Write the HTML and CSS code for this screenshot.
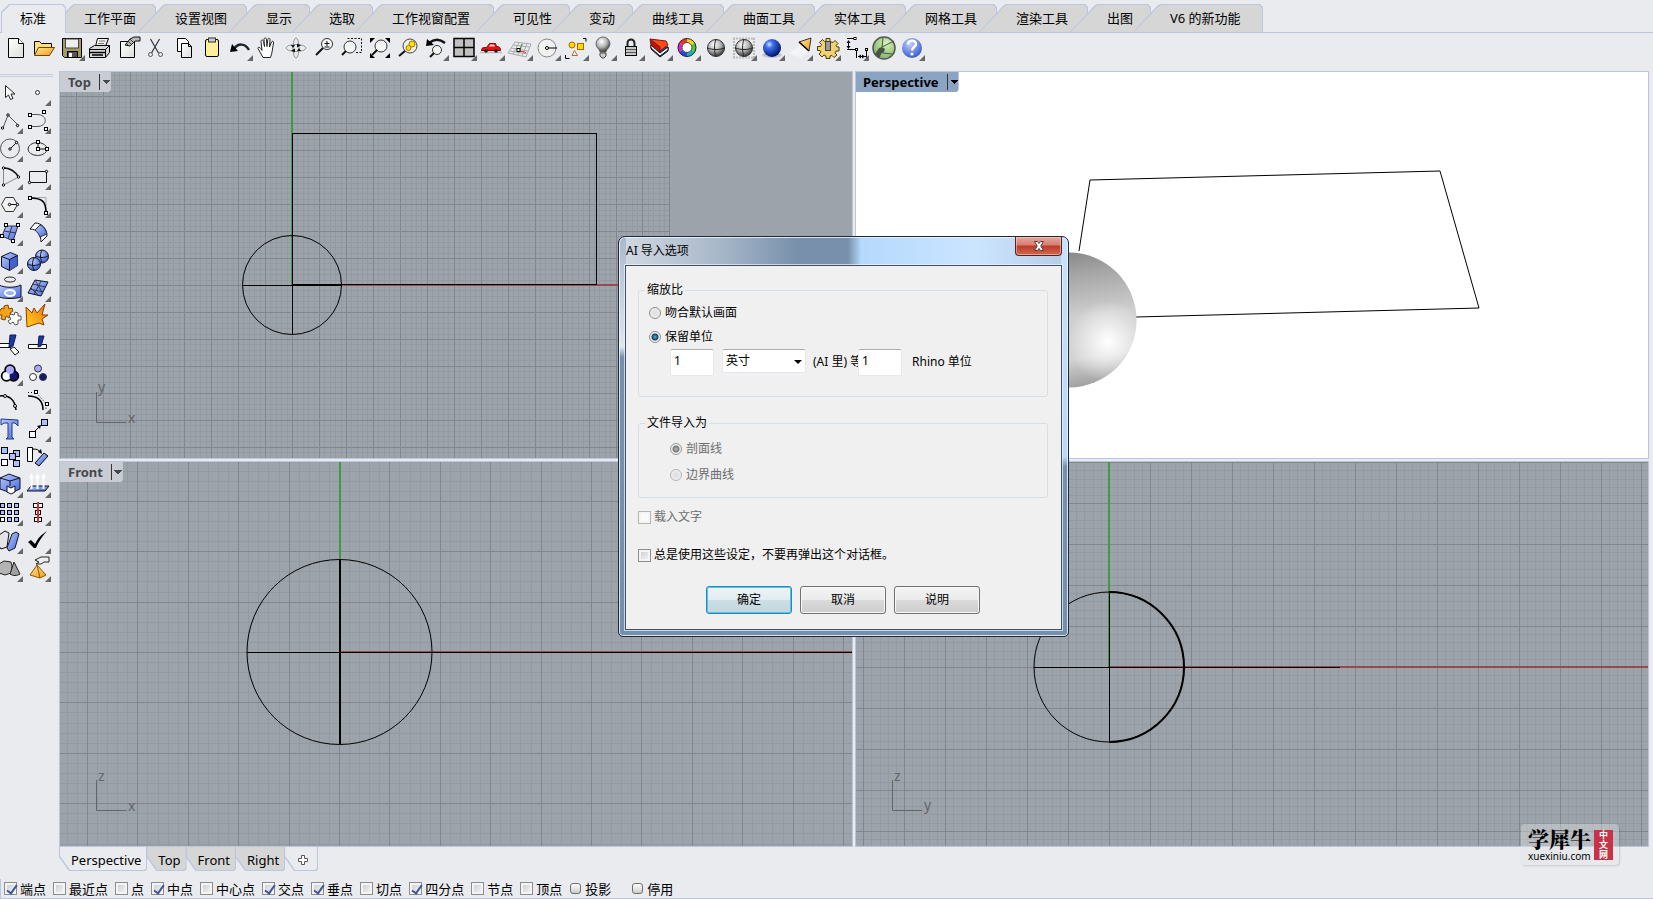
FILE: index.html
```html
<!DOCTYPE html>
<html lang="zh-CN">
<head>
<meta charset="utf-8">
<title>Rhino</title>
<link rel="stylesheet" href="styles.css">
</head>
<body>
<svg class="defs" aria-hidden="true">
  <defs>
    <linearGradient id="paper" x1="0" y1="0" x2="1" y2="1"><stop offset="0" stop-color="#fff"/><stop offset="1" stop-color="#dcdcdc"/></linearGradient>
    <linearGradient id="gold" x1="0" y1="0" x2="1" y2="1"><stop offset="0" stop-color="#ffe89a"/><stop offset="1" stop-color="#f59b12"/></linearGradient>
    <linearGradient id="fire" x1="0" y1="1" x2="1" y2="0"><stop offset="0" stop-color="#ffd21c"/><stop offset="1" stop-color="#f4700c"/></linearGradient>
    <linearGradient id="blue" x1="0" y1="0" x2="1" y2="1"><stop offset="0" stop-color="#b9cbff"/><stop offset="1" stop-color="#4468dc"/></linearGradient>
    <radialGradient id="ballBlue" cx=".35" cy=".3" r=".7"><stop offset="0" stop-color="#cfe0ff"/><stop offset=".3" stop-color="#3d6ff0"/><stop offset="1" stop-color="#02186e"/></radialGradient>
    <radialGradient id="ballGrey" cx=".4" cy=".3" r=".75"><stop offset="0" stop-color="#fff"/><stop offset=".5" stop-color="#b5b5b5"/><stop offset="1" stop-color="#222"/></radialGradient>
    <radialGradient id="ballGreen" cx=".6" cy=".3" r=".7"><stop offset="0" stop-color="#d7f5b8"/><stop offset="1" stop-color="#7fb569"/></radialGradient>
    <radialGradient id="ballLight" cx=".4" cy=".3" r=".75"><stop offset="0" stop-color="#c3d0ff"/><stop offset="1" stop-color="#2f55c8"/></radialGradient>
    <linearGradient id="sphereBody" x1=".35" y1="0" x2=".5" y2="1"><stop offset="0" stop-color="#858585"/><stop offset=".18" stop-color="#a4a4a4"/><stop offset=".5" stop-color="#cfcfcf"/><stop offset=".8" stop-color="#d2d2d2"/><stop offset="1" stop-color="#a2a2a2"/></linearGradient>
    <radialGradient id="sphereGlow" cx=".79" cy=".66" r=".3"><stop offset="0" stop-color="#fff"/><stop offset=".25" stop-color="#fff" stop-opacity=".75"/><stop offset="1" stop-color="#fff" stop-opacity="0"/></radialGradient>
  </defs>
</svg>

<div class="app">
<nav class="tabs" aria-label="工具列">
  <button class="tab tab-active">标准</button>
  <button class="tab tab-4">工作平面</button>
  <button class="tab tab-4">设置视图</button>
  <button class="tab tab-2">显示</button>
  <button class="tab tab-2">选取</button>
  <button class="tab tab-6">工作视窗配置</button>
  <button class="tab tab-3">可见性</button>
  <button class="tab tab-2">变动</button>
  <button class="tab tab-4">曲线工具</button>
  <button class="tab tab-4">曲面工具</button>
  <button class="tab tab-4">实体工具</button>
  <button class="tab tab-4">网格工具</button>
  <button class="tab tab-4">渲染工具</button>
  <button class="tab tab-2">出图</button>
  <button class="tab tab-new">V6 的新功能</button>
</nav>

<div class="toolbar" role="toolbar" aria-label="标准">
  <button class="tool" aria-label="新建"><svg viewBox="0 0 28 28"><path d="M7.500 5.500h10l5 5v14h-15z" fill="url(#paper)" stroke="#000"/><path d="M17.500 5.500v5h5" fill="#fff" stroke="#000"/></svg></button>
  <button class="tool" aria-label="打开"><svg viewBox="0 0 28 28"><path d="M5.500 21.500v-13h5l2 2h10v4" fill="#ffe07a" stroke="#000"/><path d="M5.500 22.500l4-8h16l-5 8z" fill="url(#gold)" stroke="#6b4400"/></svg></button>
  <button class="tool more" aria-label="保存"><svg viewBox="0 0 28 28"><path d="M5.500 5.500h19v19h-17l-2-2z" fill="#a49b62" stroke="#000"/><path d="M8.500 6h13v9h-13z" fill="#eee" stroke="#444"/><path d="M10.500 18.500h10v6h-10z" fill="#555" stroke="#000"/><path d="M12 20h3v4h-3z" fill="#f5f5f5"/></svg></button>
  <button class="tool" aria-label="打印"><svg viewBox="0 0 28 28"><path d="M10.500 13.500l2-8h11l-3 8z" fill="url(#paper)" stroke="#000"/><path d="M14 8h6M13 10.500h6" stroke="#777"/><path d="M4.500 15.500l5-3h15v7l-4 5h-16z" fill="#d8d8d8" stroke="#000"/><path d="M4.500 16.500h16l4-4M20.500 16.500v8" fill="none" stroke="#000"/><path d="M5 19.500h15M7 22h11" stroke="#000" stroke-width="1.500"/></svg></button>
  <button class="tool" aria-label="文件属性"><svg viewBox="0 0 28 28"><path d="M7.500 8.500h14v16h-14z" fill="url(#paper)" stroke="#000"/><path d="M12 12l5-6 4-2h6v4h-5l-5 5z" fill="#bbb" stroke="#111"/><path d="M13 10l3 3M15 8l3 3M17 6l3 3" stroke="#333"/></svg></button>
  <button class="tool" aria-label="剪切"><svg viewBox="0 0 28 28"><path d="M9.500 6l8 14M18.500 6l-8 14" fill="none" stroke="#333" stroke-width="1.200"/><circle cx="9.500" cy="21.500" r="2" fill="none" stroke="#555"/><circle cx="19.500" cy="21.500" r="2" fill="none" stroke="#555"/></svg></button>
  <button class="tool" aria-label="复制"><svg viewBox="0 0 28 28"><path d="M8.500 5.500h8l3 3v10h-11z" fill="#fff" stroke="#000"/><path d="M12.500 10.500h7l3 3v11h-10z" fill="url(#paper)" stroke="#000"/><path d="M19.500 10.500v3h3" fill="none" stroke="#000"/></svg></button>
  <button class="tool" aria-label="粘贴"><svg viewBox="0 0 28 28"><rect x="8.500" y="6.500" width="13" height="17" rx="1.500" fill="#ffef9c" stroke="#000"/><rect x="11.500" y="5" width="7" height="4" fill="#ccc" stroke="#333"/></svg></button>
  <button class="tool more" aria-label="撤销"><svg viewBox="0 0 28 28"><path d="M9 16c4-6 11-6 15 1" fill="none" stroke="#222" stroke-width="2.500"/><path d="M5 19l2-8 6 7z" fill="#000"/></svg></button>
  <button class="tool" aria-label="平移"><svg viewBox="0 0 28 28"><path d="M9 24.500c-2-3-3-6-5-9 0-2 2-2 4 2l-1-9c0-2 2-2 2.500 0l1 5-.5-7c0-2 2.500-2 2.500 0l.5 7 .8-7c.4-2 2.500-1.500 2.200.5l-.5 7 2-5c1-1.500 2.500-.5 2 1-1 5-1 9-3 14.500z" transform="translate(1 0)" fill="#fff" stroke="#222"/></svg></button>
  <button class="tool" aria-label="旋转视图"><svg viewBox="0 0 28 28"><ellipse cx="15" cy="15" rx="10" ry="3.500" fill="none" stroke="#999"/><ellipse cx="15" cy="15" rx="3" ry="10" fill="none" stroke="#999"/><path d="M10 17.500l4-2v4zM20 12.500l-4-2v4zM18 15l-2 3h4zM12 15l-2-3h4z" fill="#111"/></svg></button>
  <button class="tool" aria-label="动态缩放"><svg viewBox="0 0 28 28"><circle cx="18" cy="11" r="5.500" fill="#f8f8f8" stroke="#333"/><path d="M14 15l-7 7" stroke="#111" stroke-width="2"/><path d="M15.500 10.500h5M18 8v5M15.500 14h5" stroke="#111"/></svg></button>
  <button class="tool" aria-label="框选缩放"><svg viewBox="0 0 28 28"><path d="M10.500 5.500h14v14h-7" fill="none" stroke="#111" stroke-dasharray="2 1.500"/><circle cx="13" cy="14" r="6" fill="#f4f4f4" stroke="#333"/><path d="M9 18l-4 4" stroke="#111" stroke-width="2"/></svg></button>
  <button class="tool" aria-label="缩放至范围"><svg viewBox="0 0 28 28"><circle cx="16" cy="13" r="6" fill="#f4f4f4" stroke="#333"/><path d="M12 17l-5 5" stroke="#111" stroke-width="2"/><path d="M5 5h5l-5 5zM25 5v5l-5-5zM5 25v-5l5 5zM25 25h-5l5-5z" fill="#000"/></svg></button>
  <button class="tool" aria-label="缩放至选取"><svg viewBox="0 0 28 28"><circle cx="17" cy="13" r="7" fill="#eee" stroke="#444"/><circle cx="19" cy="11" r="3" fill="#ffe000" stroke="#a07800"/><circle cx="15.500" cy="15" r="2.500" fill="#ffe000" stroke="#a07800"/><path d="M12 18l-6 5" stroke="#111" stroke-width="2"/></svg></button>
  <button class="tool more" aria-label="复原视图"><svg viewBox="0 0 28 28"><path d="M8 10c5-4 11-4 16 0" fill="none" stroke="#111" stroke-width="2.500"/><path d="M5 13l1-7 7 6z" fill="#000"/><circle cx="16" cy="17" r="4.500" fill="#f4f4f4" stroke="#333"/><path d="M13 20l-4 4" stroke="#111" stroke-width="2"/></svg></button>
  <button class="tool more" aria-label="四视图"><svg viewBox="0 0 28 28"><path d="M5 5.500h20v18h-20zM15 5v19M5 14.500h20" fill="#c0c0c0" stroke="#000" stroke-width="1.500"/></svg></button>
  <button class="tool more" aria-label="隐藏物件"><svg viewBox="0 0 28 28"><path d="M3 19.500h22" stroke="#bbb" stroke-width="1.500"/><path d="M4.500 17.500c0-2.500 1-3 5-3l3-4h6l1 3c3 0 4 1 4 4z" fill="#e51414" stroke="#8a0000"/><path d="M13 11.500h4l1 2h-6z" fill="#ffd6d6"/><circle cx="9" cy="18" r="1.800" fill="#222"/><circle cx="19" cy="18" r="1.800" fill="#222"/></svg></button>
  <button class="tool more" aria-label="工作平面"><svg viewBox="0 0 28 28"><path d="M10 9l16 2-5 13L3 20zM8 12l16 2M6 15l17 3M5 18l17 3M14 9.500L8 21M18 10l-5 12M22 10.500L17 23" fill="none" stroke="#aaa"/><path d="M15 18l6 1.500" stroke="#d22"/><path d="M15 16l2-5" stroke="#2a2"/><rect x="12" y="15.500" width="3" height="3" fill="#fff" stroke="#000"/></svg></button>
  <button class="tool more" aria-label="设置视图"><svg viewBox="0 0 28 28"><circle cx="14" cy="15" r="9" fill="#f1f1f1" stroke="#888"/><path d="M14 15h10" stroke="#000"/><circle cx="14" cy="15" r="1.500" fill="#fff" stroke="#000"/></svg></button>
  <button class="tool more" aria-label="物件选取"><svg viewBox="0 0 28 28"><circle cx="11" cy="12" r="3" fill="#ffd900" stroke="#a36b00"/><rect x="16.500" y="10.500" width="6" height="6" fill="#ffd900" stroke="#a36b00"/><path d="M11 22.500l2.500-5 3 5z" fill="#fff" stroke="#b06a35"/><path d="M22 5.500h3v3M4.500 22v3.500h4" fill="none" stroke="#000"/></svg></button>
  <button class="tool more" aria-label="灯光"><svg viewBox="0 0 28 28"><path d="M11 19c0-3-4-4-4-8a7 7 0 0 1 14 0c0 4-4 5-4 8z" fill="url(#ballGrey)" stroke="#666"/><path d="M11 20h6v3l-2 2h-2l-2-2z" fill="#ccc" stroke="#444"/></svg></button>
  <button class="tool more" aria-label="锁定"><svg viewBox="0 0 28 28"><path d="M10.500 14v-4a3.500 3.500 0 0 1 7 0v4" fill="none" stroke="#222" stroke-width="2"/><rect x="8.500" y="13.500" width="11" height="9" fill="#c6c6c6" stroke="#000"/><path d="M9 16.500h10M9 19.500h10" stroke="#555"/></svg></button>
  <button class="tool more" aria-label="图层"><svg viewBox="0 0 28 28"><path d="M6 16l9 8 8-6v-4l-17-2z" fill="#2c49ac" stroke="#111"/><path d="M6 12l9 8 8-6v3l-8 6-9-8z" fill="#fff" stroke="#111"/><path d="M5 6l10 8v5l-9-7z" fill="#b31a08" stroke="#811"/><path d="M5 6l16 2 2 4-8 6v-4z" fill="#ff4a16" stroke="#811"/></svg></button>
  <button class="tool more" aria-label="物件属性"><svg viewBox="0 0 28 28"><g fill="none" stroke-width="4"><path d="M14 7.500a7 7 0 0 1 6.100 3.500" stroke="#ffd21c"/><path d="M20.100 11a7 7 0 0 1 0 7" stroke="#4fca31"/><path d="M20.100 18a7 7 0 0 1-6.100 3.500" stroke="#11b7bd"/><path d="M14 21.500a7 7 0 0 1-6.100-3.500" stroke="#2947df"/><path d="M7.900 18a7 7 0 0 1 0-7" stroke="#dd1ed1"/><path d="M7.900 11a7 7 0 0 1 6.100-3.500" stroke="#f3302b"/></g><circle cx="14" cy="14.500" r="9" fill="none" stroke="#222"/><circle cx="14" cy="14.500" r="5" fill="#fff" stroke="#444"/></svg></button>
  <button class="tool" aria-label="着色"><svg viewBox="0 0 28 28"><circle cx="15" cy="15" r="8.500" fill="url(#ballGrey)" stroke="#333"/><path d="M15 6.500c-2 5-2 12 0 17M6.500 15c5 2 12 2 17 0" fill="none" stroke="#222"/></svg></button>
  <button class="tool more" aria-label="着色选取"><svg viewBox="0 0 28 28"><path d="M4 5.500h22M4 24.500h22M5 5v20M25 5v20" fill="none" stroke="#bcbcbc" stroke-width="2" stroke-dasharray="2 1"/><circle cx="15" cy="15" r="8.500" fill="url(#ballGrey)" stroke="#333"/><path d="M15 6.500c-2 5-2 12 0 17M6.500 15c5 2 12 2 17 0" fill="none" stroke="#222"/></svg></button>
  <button class="tool more" aria-label="渲染"><svg viewBox="0 0 28 28"><ellipse cx="15" cy="22" rx="10" ry="3" fill="#c4c5ca"/><circle cx="15" cy="15" r="9" fill="url(#ballBlue)"/></svg></button>
  <button class="tool more" aria-label="聚光灯"><svg viewBox="0 0 28 28"><path d="M4 20l13-9 6 7-7 7z" fill="#f4f4f8"/><path d="M14 9l12-4-2 13z" fill="url(#gold)" stroke="#333"/><path d="M14 9l10 9" stroke="#000" stroke-width="1.500"/></svg></button>
  <button class="tool more" aria-label="选项"><svg viewBox="0 0 28 28"><path d="M13 5.500h4v3l3 1 2-2 3 3-2 2 1 1.500h2v4h-3l-1 2 2 2-3 2.500-2-2-2 .5v2.500h-4v-2.500l-2-1-2 2-3-3 2-2-1-1.500H4.500v-4h3l1-2-2-2 3-3 2 2 1.500-.5z" fill="#f0d274" stroke="#4b3a00"/><rect x="12.500" y="8.500" width="5" height="9" fill="#999" stroke="#444"/></svg></button>
  <button class="tool more" aria-label="尺寸标注"><svg viewBox="0 0 28 28"><path d="M6 5.500h8M6 16.500h8M7.500 8v7M15.500 17v8M25.500 17v8M17 23.500h8" fill="none" stroke="#000"/><path d="M7.500 7l-2 3h4zM7.500 16l-2-3h4zM17 23.500l3-2v4zM24 23.500l-3-2v4z" fill="#000"/><g fill="#fff" stroke="#000"><rect x="13" y="4.500" width="2" height="2"/><rect x="14.500" y="15.500" width="2" height="2"/><rect x="24.500" y="15.500" width="2" height="2"/></g></svg></button>
  <button class="tool" aria-label="Grasshopper"><svg viewBox="0 0 28 28"><circle cx="15" cy="15" r="11" fill="url(#ballGreen)" stroke="#555" stroke-width="1.500"/><path d="M6 21l4-6 3-1 3 2-1 3-3 2-1 3-2 0z" fill="#4b5348"/><path d="M13 14l12-6M14 5l-1 9M14 20l9 1" fill="none" stroke="#4b5348"/></svg></button>
  <button class="tool more" aria-label="说明"><svg viewBox="0 0 28 28"><circle cx="15" cy="15" r="10" fill="url(#ballLight)"/><path d="M11 11.500c0-5 8-5 8-.5 0 3-4 3-4 6.500" fill="none" stroke="#fff" stroke-width="2.500"/><circle cx="15" cy="21" r="1.600" fill="#fff"/></svg></button>
</div>

<div class="workspace">
<aside class="side" role="toolbar" aria-label="主要">
  <button class="tool" aria-label="选取"><svg viewBox="0 0 28 28"><path d="M10.500 7.500v12l3-2.500 2 4.500 2.500-1-2-4.500h4z" fill="#fff" stroke="#222"/></svg></button>
  <button class="tool more" aria-label="点"><svg viewBox="0 0 28 28"><circle cx="14.500" cy="14.500" r="2" fill="#fff" stroke="#333"/></svg></button>
  <button class="tool more" aria-label="多重直线"><svg viewBox="0 0 28 28"><path d="M8 22l5-13 10 10" fill="none" stroke="#555"/><g fill="#fff" stroke="#000"><circle cx="7.500" cy="22" r="1.200"/><circle cx="13" cy="9" r="1.200"/><circle cx="22.500" cy="19.500" r="1.200"/></g></svg></button>
  <button class="tool more" aria-label="曲线"><svg viewBox="0 0 28 28"><path d="M7 8.500h7c11 0 11 12 0 12H7" fill="none" stroke="#555"/><g fill="#fff" stroke="#000"><rect x="5.500" y="7.500" width="3" height="3"/><rect x="19.500" y="4.500" width="3" height="3"/><rect x="5.500" y="19.500" width="3" height="3"/><rect x="21.500" y="21.500" width="3" height="3"/></g></svg></button>
  <button class="tool more" aria-label="圆"><svg viewBox="0 0 28 28"><circle cx="15" cy="14.500" r="9.500" fill="none" stroke="#555"/><path d="M15 15l7-7" stroke="#111"/><g fill="#fff" stroke="#000"><circle cx="15" cy="15" r="1.200"/><circle cx="21.500" cy="8.500" r="1.200"/></g></svg></button>
  <button class="tool more" aria-label="椭圆"><svg viewBox="0 0 28 28"><ellipse cx="14.500" cy="15" rx="9.500" ry="6.500" fill="none" stroke="#333"/><path d="M15 8v7h9" fill="none" stroke="#111"/><g fill="#fff" stroke="#000"><rect x="13.500" y="6.500" width="3" height="3"/><rect x="13.500" y="13.500" width="3" height="3"/><rect x="22.500" y="13.500" width="3" height="3"/></g></svg></button>
  <button class="tool more" aria-label="圆弧"><svg viewBox="0 0 28 28"><path d="M8.500 23V6c7 0 12 4 15 9z" fill="none" stroke="#888"/><path d="M8.500 6c7 0 12 4 15 9" fill="none" stroke="#111" stroke-width="1.500"/><g fill="#fff" stroke="#000"><circle cx="8.500" cy="6" r="1.200"/><circle cx="23.500" cy="15" r="1.200"/><circle cx="8.500" cy="23" r="1.200"/></g></svg></button>
  <button class="tool more" aria-label="矩形"><svg viewBox="0 0 28 28"><path d="M6.500 9.500h17v11h-17z" fill="none" stroke="#111"/><g fill="#fff" stroke="#000"><circle cx="23.500" cy="9.500" r="1.200"/><circle cx="6.500" cy="20.500" r="1.200"/></g></svg></button>
  <button class="tool more" aria-label="多边形"><svg viewBox="0 0 28 28"><path d="M10.500 7.500h8l4 7-4 7h-8l-4-7z" fill="#f1f1f1" stroke="#333"/><path d="M14 14.500h9" stroke="#111"/><g fill="#fff" stroke="#000"><circle cx="14.500" cy="14.500" r="1.200"/><circle cx="22.500" cy="14.500" r="1.200"/></g></svg></button>
  <button class="tool more" aria-label="曲线圆角"><svg viewBox="0 0 28 28"><path d="M7 7.500h16V24" fill="none" stroke="#aaa"/><path d="M7 8c13 0 16 4 16 15" fill="none" stroke="#000" stroke-width="1.500"/><g fill="#fff" stroke="#000"><rect x="5.500" y="6.500" width="3" height="3"/><rect x="21.500" y="21.500" width="3" height="3"/></g></svg></button>
  <button class="tool more" aria-label="曲面"><svg viewBox="0 0 28 28"><path d="M11 8h12l-5 15-11-5z" fill="url(#blue)" stroke="#334"/><path d="M17 8l-4 13M9 13l12 2" stroke="#334"/><g fill="#fff" stroke="#000"><rect x="9.500" y="5.500" width="3" height="3"/><rect x="21.500" y="5.500" width="3" height="3"/><rect x="5.500" y="16.500" width="3" height="3"/><rect x="16.500" y="21.500" width="3" height="3"/></g></svg></button>
  <button class="tool more" aria-label="扫掠"><svg viewBox="0 0 28 28"><path d="M7 11l5-6c7 0 12 6 12 13l-6 6c0-7-4-13-11-13z" fill="#fff" stroke="#111"/><path d="M12 12l5-5c4 2 6 5 7 9l-7 3c-1-3-3-5-5-7z" fill="url(#blue)" stroke="#334"/></svg></button>
  <button class="tool more" aria-label="立方体"><svg viewBox="0 0 28 28"><path d="M6.500 10.500l9-4 7 3v10l-8 5-8-4z" fill="url(#blue)" stroke="#112"/><path d="M14.500 13.500l8-4v10l-8 5z" fill="#4162c8"/><path d="M6.500 10.500l8 3 8-4M14.500 13.500v11" fill="none" stroke="#112"/></svg></button>
  <button class="tool more" aria-label="布尔运算"><svg viewBox="0 0 28 28"><circle cx="19" cy="10.500" r="6.500" fill="url(#ballLight)" stroke="#112"/><circle cx="11" cy="18" r="6.500" fill="url(#ballLight)" stroke="#112"/><path d="M19 4c-2 4-2 8 0 12M5 18c4 2 8 2 12 0M11 12c-2 4-2 8 0 12M13 10c4 2 8 2 12 0" fill="none" stroke="#112"/></svg></button>
  <button class="tool more" aria-label="挤出"><svg viewBox="0 0 28 28"><ellipse cx="15" cy="5.500" rx="5.500" ry="2.500" fill="none" stroke="#222"/><path d="M4 11c6 3 16 3 22 0v12c-6 2-16 2-22 0z" fill="url(#blue)" stroke="#112"/><ellipse cx="15" cy="19" rx="5" ry="3" fill="#9db4ff" stroke="#fff" stroke-width="2"/></svg></button>
  <button class="tool more" aria-label="网格"><svg viewBox="0 0 28 28"><path d="M12 6l13 2-7 14-13-3z" fill="url(#blue)" stroke="#112"/><path d="M18 7l-7 13.500M9.500 10l13 3M7 15l13 3M12 6l7 12M8 14l7 7" stroke="#334" fill="none"/></svg></button>
  <button class="tool" aria-label="组合"><svg viewBox="0 0 28 28"><path d="M5 8l2-2 2 1V4l4-1 1 4 3-1 1 3-3 2 2 3-3 2-3-2-1 4-4-1 1-4-3 0z" fill="#f7a21b" stroke="#7a4700"/><path d="M14 14l2-2 3 1 1-3 3 1 0 3 3 0 0 4-3 0 0 4-3 1-2-3-3 2-2-3 3-2z" fill="#fff" stroke="#555"/></svg></button>
  <button class="tool" aria-label="炸开"><svg viewBox="0 0 28 28"><path d="M3 5l6 6 2-5 3 5 8-9-3 11 6 0-6 4 2 6-5-2-12 4z" fill="url(#fire)" stroke="#8b3d00"/></svg></button>
  <button class="tool" aria-label="修剪"><svg viewBox="0 0 28 28"><path d="M4 13.500h12v4H4zM15 19l4-2 5 5-4 3z" fill="#fff" stroke="#111"/><path d="M15 5h6l-3 11-4 1z" fill="#1d3a9c" stroke="#0a1c5c"/></svg></button>
  <button class="tool" aria-label="分割"><svg viewBox="0 0 28 28"><path d="M5.500 14.500h18v4h-18z" fill="#fff" stroke="#111"/><path d="M16 6h5l-3 10-3 1z" fill="#1d3a9c" stroke="#0a1c5c"/></svg></button>
  <button class="tool more" aria-label="群组"><svg viewBox="0 0 28 28"><g stroke="#000" stroke-width="2.500"><circle cx="15" cy="12" r="4.500"/><circle cx="11.500" cy="18" r="4.500"/><circle cx="18.500" cy="18" r="4.500"/></g><circle cx="11.500" cy="18" r="4" fill="#fff"/><circle cx="18.500" cy="18" r="4" fill="#15157a"/><circle cx="15" cy="12" r="4" fill="#a9a9ff"/></svg></button>
  <button class="tool" aria-label="解散群组"><svg viewBox="0 0 28 28"><g stroke="#333"><circle cx="15" cy="10.500" r="3.500" fill="#a9a9ff"/><circle cx="10" cy="19" r="3.500" fill="#fff"/><circle cx="20" cy="19" r="3.500" fill="#15157a"/></g></svg></button>
  <button class="tool" aria-label="编辑点"><svg viewBox="0 0 28 28"><path d="M4 10c10-1 16 3 17 14" fill="none" stroke="#000" stroke-width="1.500"/><g fill="#fff" stroke="#000"><circle cx="10" cy="10" r="1.500"/><circle cx="20" cy="20" r="1.500"/></g></svg></button>
  <button class="tool more" aria-label="控制点"><svg viewBox="0 0 28 28"><path d="M5 10c10 0 15 5 15 14" fill="none" stroke="#000" stroke-width="1.500"/><path d="M5 6.500h8l10 11v7" fill="none" stroke="#000" stroke-dasharray="1 2"/><g fill="#fff" stroke="#000"><rect x="11.500" y="4.500" width="3" height="3"/><rect x="22.500" y="16.500" width="3" height="3"/></g></svg></button>
  <button class="tool" aria-label="文字"><svg viewBox="0 0 28 28"><path d="M6 5l17 1v6l-3-3h-3v14l2 2h-8l2-2V9H9l-3 2z" fill="url(#blue)" stroke="#203a80"/></svg></button>
  <button class="tool more" aria-label="移动"><svg viewBox="0 0 28 28"><rect x="6.500" y="17.500" width="6" height="6" fill="#fff" stroke="#000"/><rect x="18.500" y="5.500" width="6" height="6" fill="#a9bfff" stroke="#000"/><path d="M12 17l4-4" stroke="#000"/><path d="M18 11l-1 4-3-3z" fill="#000"/></svg></button>
  <button class="tool" aria-label="阵列复制"><svg viewBox="0 0 28 28"><g fill="#a9bfff" stroke="#000"><rect x="6.500" y="5.500" width="6" height="6"/><rect x="18.500" y="8.500" width="6" height="6"/><rect x="14.500" y="11.500" width="6" height="6"/><rect x="18.500" y="18.500" width="6" height="6"/><rect x="6.500" y="17.500" width="6" height="6" fill="#fff"/></g></svg></button>
  <button class="tool" aria-label="旋转"><svg viewBox="0 0 28 28"><path d="M4.500 5.500h5v14h-5z" fill="#fff" stroke="#000"/><path d="M12 21l9-10 4 3-9 10z" fill="url(#blue)" stroke="#000"/><path d="M10 7c4 0 6 1 7 3" fill="none" stroke="#000"/><path d="M19 12l-4-2 3-3z" fill="#000"/></svg></button>
  <button class="tool more" aria-label="实体编辑"><svg viewBox="0 0 28 28"><path d="M5 8l9-4 11 4v11l-9 4-11-4z" fill="url(#blue)" stroke="#112"/><path d="M5 8l10 3 10-3M15 11v5" fill="none" stroke="#112"/><path d="M12 16l4 2 4-2v6l-4 2-4-2z" fill="#fff" stroke="#112"/></svg></button>
  <button class="tool more" aria-label="投影"><svg viewBox="0 0 28 28"><path d="M8 16h18l-4 5H4z" fill="url(#blue)" stroke="#112"/><path d="M8.500 19V7M14.500 19V7M20.500 19V7" stroke="#fff" stroke-width="2"/><path d="M8.500 3l-2.500 5h5zM14.500 3l-2.500 5h5zM20.500 3l-2.500 5h5z" fill="#fff"/></svg></button>
  <button class="tool more" aria-label="阵列"><svg viewBox="0 0 28 28"><g fill="#a9bfff" stroke="#000"><rect x="5.500" y="5.500" width="4" height="4"/><rect x="12.500" y="5.500" width="4" height="4"/><rect x="19.500" y="5.500" width="4" height="4"/><rect x="5.500" y="12.500" width="4" height="4"/><rect x="12.500" y="12.500" width="4" height="4"/><rect x="19.500" y="12.500" width="4" height="4"/><rect x="5.500" y="19.500" width="4" height="4" fill="#fff"/><rect x="12.500" y="19.500" width="4" height="4"/><rect x="19.500" y="19.500" width="4" height="4"/></g></svg></button>
  <button class="tool more" aria-label="对齐"><svg viewBox="0 0 28 28"><g fill="#fff" stroke="#000"><rect x="10.500" y="5.500" width="9" height="4"/><rect x="12.500" y="12.500" width="5" height="4"/><rect x="11.500" y="19.500" width="7" height="4"/></g><path d="M15 4v21" stroke="#d83030" stroke-width="2"/></svg></button>
  <button class="tool more" aria-label="弯曲"><svg viewBox="0 0 28 28"><path d="M4 9l6-4 4 2-2 14-6 2-2-3z" fill="#e4e4e4" stroke="#111"/><path d="M17 8l4-2 3 2-4 14-6 3-2-3z" fill="url(#blue)" stroke="#112"/></svg></button>
  <button class="tool more" aria-label="检查"><svg viewBox="0 0 28 28"><path d="M5 16l3-2 4 4c3-6 6-9 12-13-5 6-9 11-11 17h-2z" fill="#000"/></svg></button>
  <button class="tool more" aria-label="实体"><svg viewBox="0 0 28 28"><path d="M4 10l5-3 7 1 1 4-1 7-6 2-6-2z" fill="#b4b4b4" stroke="#222"/><path d="M19 8l6 12c-3 2-7 2-10 0z" fill="#a0a0a0" stroke="#222"/></svg></button>
  <button class="tool more" aria-label="金字塔"><svg viewBox="0 0 28 28"><path d="M14 11l9 10-6 3-10-3z" fill="url(#gold)" stroke="#8b5500"/><path d="M14 11l3 13" stroke="#8b5500"/><path d="M12 6l6-3h8v5h-5l-3 2h-5l3-2z" fill="#eee" stroke="#222"/></svg></button>
</aside>

<main class="views">
  <section class="view">
    <svg class="canvas" data-x="232" data-y="213" data-pitch="26.96" data-end="14">
      <g class="grid"></g>
      <path class="axis-y" d="M232 0v213"/>
      <path class="axis-x" d="M232 213h378"/>
      <path class="curve crisp" d="M232.500 61.500h304v151h-304zM182 213.500h100M232.500 163v100"/>
      <circle class="curve" cx="232" cy="213" r="49.500"/>
      <path class="mark" d="M36.500 320v30.500h30"/>
      <text class="mark-text" x="38" y="320">y</text><text class="mark-text" x="68" y="351">x</text>
    </svg>
    <button class="view-name">Top</button>
  </section>
  <section class="view view-light">
    <svg class="canvas">
      <path class="curve" d="M223 179L234 108 584 99 623 236 280 245"/>
      <circle cx="213" cy="248" r="67.500" fill="url(#sphereBody)"/>
      <circle cx="213" cy="248" r="67.500" fill="url(#sphereGlow)"/>
    </svg>
    <button class="view-name view-name-on">Perspective</button>
  </section>
  <section class="view">
    <svg class="canvas" data-x="279" data-y="190" data-pitch="50.4">
      <g class="grid"></g>
      <path class="axis-y" d="M279.500 0v190"/>
      <path class="axis-x" d="M279 189.500h3000"/>
      <path class="curve crisp" d="M187 190.500h3000"/>
      <path class="curve curve-bold crisp" d="M279.500 97v185"/>
      <circle class="curve" cx="279.500" cy="190" r="92.500"/>
      <path class="mark" d="M36.500 318v30.500h30"/>
      <text class="mark-text" x="38" y="319">z</text><text class="mark-text" x="68" y="349">x</text>
    </svg>
    <button class="view-name">Front</button>
  </section>
  <section class="view">
    <svg class="canvas" data-x="253" data-y="205" data-pitch="40.96">
      <g class="grid"></g>
      <path class="axis-y" d="M253 0v205"/>
      <path class="axis-x" d="M253 204.500h3000"/>
      <path class="curve crisp" d="M178 205.500h306M253.500 130v150"/>
      <circle class="curve" cx="253" cy="205" r="75"/>
      <path class="curve curve-bold" d="M253 130a75 75 0 0 1 0 150"/>
      <path class="mark" d="M36.500 318v30.500h30"/>
      <text class="mark-text" x="38" y="319">z</text><text class="mark-text" x="68" y="348">y</text>
    </svg>
    <button class="view-name">Right</button>
  </section>
</main>
</div>

<nav class="view-tabs" aria-label="视图">
  <button class="view-tab view-tab-on">Perspective</button>
  <button class="view-tab">Top</button>
  <button class="view-tab">Front</button>
  <button class="view-tab">Right</button>
  <button class="view-tab view-tab-on view-tab-add" aria-label="新建视图"><svg viewBox="0 0 10 10"><path d="M3.500.5h3v3h3v3h-3v3h-3v-3h-3v-3h3z" fill="#fff" stroke="#555"/></svg></button>
</nav>

<footer class="snaps">
  <label class="snap"><input class="check" type="checkbox" checked>端点</label>
  <label class="snap"><input class="check" type="checkbox">最近点</label>
  <label class="snap"><input class="check" type="checkbox">点</label>
  <label class="snap"><input class="check" type="checkbox" checked>中点</label>
  <label class="snap"><input class="check" type="checkbox">中心点</label>
  <label class="snap"><input class="check" type="checkbox" checked>交点</label>
  <label class="snap"><input class="check" type="checkbox" checked>垂点</label>
  <label class="snap"><input class="check" type="checkbox">切点</label>
  <label class="snap"><input class="check" type="checkbox" checked>四分点</label>
  <label class="snap"><input class="check" type="checkbox">节点</label>
  <label class="snap"><input class="check" type="checkbox">顶点</label>
  <label class="snap snap-mode"><input class="check check-soft" type="checkbox">投影</label>
  <label class="snap snap-mode"><input class="check check-soft" type="checkbox">停用</label>
</footer>
</div>

<div class="badge">
  <div><div class="badge-name">学犀牛</div><div class="badge-site">xuexiniu.com</div></div>
  <div class="badge-seal">中文网</div>
</div>

<div class="dialog" role="dialog" aria-labelledby="dialog-title">
  <header class="dialog-head">
    <h1 class="dialog-title" id="dialog-title">AI 导入选项</h1>
    <button class="close" aria-label="关闭"><svg viewBox="0 0 12 10"><path d="M1.500.5h3L6 2.500 7.500.5h3L7.800 5l2.700 4.500h-3L6 7.500l-1.500 2h-3L4.200 5z" fill="#fff" stroke="#5a3a3e"/></svg></button>
  </header>
  <form class="dialog-body">
    <fieldset class="group group-scale">
      <legend>缩放比</legend>
      <label class="row"><input class="radio" type="radio" name="scale">吻合默认画面</label>
      <label class="row"><input class="radio" type="radio" name="scale" checked>保留单位</label>
      <div class="units">
        <input class="num" type="text" value="1" aria-label="AI 数值">
        <span class="pick"><select class="unit" aria-label="AI 单位"><option>英寸</option></select></span>
        <label class="equals" for="rhino-units">(AI 里) 等于</label>
        <input class="num" id="rhino-units" type="text" value="1">
        <span class="units-end">Rhino 单位</span>
      </div>
    </fieldset>
    <fieldset class="group group-import" disabled>
      <legend>文件导入为</legend>
      <label class="row row-off"><input class="radio" type="radio" name="import" checked>剖面线</label>
      <label class="row row-off"><input class="radio" type="radio" name="import">边界曲线</label>
    </fieldset>
    <label class="option row-off"><input class="check" type="checkbox" disabled>载入文字</label>
    <label class="option option-last"><input class="check" type="checkbox">总是使用这些设定，不要再弹出这个对话框。</label>
    <div class="actions">
      <button class="action action-main" type="button">确定</button>
      <button class="action" type="button">取消</button>
      <button class="action" type="button">说明</button>
    </div>
  </form>
</div>
<script src="grid.js"></script>
</body>
</html>
```

FILE: styles.css
```css
* { box-sizing: border-box; }

body {
  margin: 0;
  background: #eaebef;
  color: #000;
  font: 13px/20px "Noto Sans", "Noto Sans CJK SC", sans-serif;
  overflow: hidden;
}

button, input, select { font: inherit; color: inherit; }
button { border: 0; background: none; padding: 0; }

.defs { position: absolute; width: 0; height: 0; }

.app { display: flex; flex-direction: column; height: 100vh; }

/* Toolbar tabs */
.tabs {
  display: flex;
  flex: none;
  padding: 4px 0 0 1px;
  box-shadow: inset 0 -1px #bcc6de;
  height: 33px;
}
.tab {
  position: relative;
  isolation: isolate;
  height: 28px;
  padding-left: 37px;
  margin-left: -18px;
  text-align: left;
  white-space: nowrap;
  background: #bcc6de;
  clip-path: polygon(0 100%, 24px 2px, 27px 0, calc(100% - 3px) 0, 100% 3px, 100% 100%);
}
.tab::before {
  content: "";
  position: absolute;
  z-index: -1;
  inset: 1px 1px 0 1px;
  background: #d6d6d6;
  clip-path: polygon(0 100%, 24px 2px, 27px 0, calc(100% - 3px) 0, 100% 3px, 100% 100%);
}
.tab-2 { width: 81px; }
.tab-3 { width: 94px; }
.tab-4 { width: 109px; }
.tab-6 { width: 139px; }
.tab-new { width: 130px; }
.tab-active {
  z-index: 1;
  width: 65px;
  height: 29px;
  padding: 0 0 1px 19px;
  margin-left: 0;
}
.tab-active, .tab-active::before {
  clip-path: polygon(0 100%, 0 8px, 8px 0, calc(100% - 3px) 0, 100% 3px, 100% 100%);
}
.tab-active::before { background: #eaebef; }
.tab-active + .tab { margin-left: -19px; }

/* Icon tools */
.toolbar { display: flex; flex: none; height: 38px; padding-left: 1px; }
.tool { position: relative; width: 28px; height: 28px; }
.tool svg { display: block; width: 28px; height: 28px; }
.more::after {
  content: "";
  position: absolute;
  right: 0;
  bottom: 0;
  border: 3px solid;
  border-color: transparent #666 #666 transparent;
}

.workspace { display: flex; flex: 1; min-height: 0; padding-right: 4px; }
.side {
  display: grid;
  grid-template-columns: 28px 28px;
  align-content: start;
  flex: none;
  width: 64px;
  margin-left: -5px;
  padding-top: 7px;
  background: linear-gradient(#c5cde1, #c5cde1) 0 3px / 58px 1px no-repeat, linear-gradient(#c5cde1, #c5cde1) 0 5px / 58px 1px no-repeat;
}

/* Viewports */
.views {
  display: grid;
  flex: 1;
  min-width: 0;
  grid-template: 388fr 386fr / 1fr 1fr;
  gap: 2px;
}
.view {
  position: relative;
  min-width: 0;
  min-height: 0;
  border: 1px solid #bcc6da;
  background: #9da3ab;
}
.view-light { background: #fff; }
.canvas { display: block; position: absolute; inset: 0; width: 100%; height: 100%; }
.minor, .major { fill: none; shape-rendering: crispEdges; }
.minor { stroke: #949aa2; }
.major { stroke: #83868f; }
.axis-x, .axis-y { fill: none; stroke-width: 2; shape-rendering: crispEdges; }
.axis-x { stroke: #964b4d; }
.axis-y { stroke: #3f9a41; }
.curve { fill: none; stroke: #000; }
.curve-bold { stroke-width: 2; }
.crisp { shape-rendering: crispEdges; }
.mark { fill: none; stroke: #62656a; }
.mark-text { fill: #62656a; font-size: 14px; }
.view-name {
  position: relative;
  display: flex;
  align-items: center;
  height: 20px;
  padding-left: 8px;
  background: #c9ccd2;
  color: #45484d;
  font-size: 13px;
  font-weight: 700;
  clip-path: polygon(0 0, 100% 0, 100% calc(100% - 2px), calc(100% - 2px) 100%, 0 100%);
}
.view-name::after {
  content: "";
  width: 11px;
  height: 16px;
  margin-left: 8px;
  border-left: 1px solid #333;
  background: conic-gradient(from -45deg at 50% 100%, currentColor 90deg, transparent 0) 2px 6px / 8px 4px no-repeat;
}
.view-name-on { padding-left: 7px; background: #8ba4c1; color: #000; }

/* Viewport tabs */
.view-tabs { display: flex; flex: none; height: 32px; padding-left: 59px; }
.view-tab {
  position: relative;
  isolation: isolate;
  height: 24px;
  margin-right: -1px;
  padding: 1px 6px 0 12px;
  font-size: 13px;
  background: #bcc6de;
}
.view-tab::before {
  content: "";
  position: absolute;
  z-index: -1;
  inset: 0 1px 1px 1px;
  background: #d6d6d6;
}
.view-tab, .view-tab::before {
  clip-path: polygon(0 0, 100% 0, 100% calc(100% - 2px), calc(100% - 2px) 100%, 10px 100%, 0 calc(100% - 14px));
}
.view-tab-on::before { background: #eaebef; }
.view-tab-add { width: 34px; padding-left: 14px; }
.view-tab-add svg { display: block; width: 10px; height: 10px; }

/* Object snaps */
.snaps {
  display: flex;
  flex: none;
  gap: 7px;
  height: 20px;
  padding-left: 3px;
  border-left: 1px solid #bcc6de;
  border-bottom: 1px solid #bcc6de;
}
.snap { display: flex; align-items: center; gap: 3px; white-space: nowrap; }
.snap-mode { gap: 4px; margin: 0 13px 0 1px; }

.check {
  appearance: none;
  position: relative;
  flex: none;
  width: 13px;
  height: 13px;
  margin: 0;
  border: 1px solid #8b8d8f;
  background: linear-gradient(135deg, #c6c9ce, #f8f8f8);
  box-shadow: inset 0 0 0 2px #f4f4f4;
}
.check:checked::after {
  content: "";
  position: absolute;
  left: 4px;
  top: 0;
  width: 4px;
  height: 9px;
  border: solid #3f5698;
  border-width: 0 2px 2px 0;
  transform: rotate(35deg);
}
.check:disabled { border-color: #b5b5b5; background: #fafafa; }
.check-soft {
  width: 11px;
  height: 11px;
  border-radius: 3px;
  border-color: #6f6f6f;
  background: linear-gradient(#fff, #ccc);
  box-shadow: none;
}

/* Watermark */
.badge {
  position: absolute;
  right: 34px;
  bottom: 34px;
  display: flex;
  gap: 3px;
  padding: 6px 6px 3px 7px;
  border-radius: 4px;
  background: rgba(225, 227, 231, 0.4);
  box-shadow: 1px 1px 2px rgba(0, 0, 0, 0.15);
}
.badge-name { font: 900 21px/20px "Liberation Serif", "Noto Serif CJK SC", "Noto Sans CJK SC", serif; }
.badge-site { font-size: 10px; line-height: 12px; }
.badge-seal {
  width: 19px;
  height: 30px;
  padding: 0 5px;
  background: #c73346;
  color: #fff;
  font-size: 9px;
  font-weight: 700;
  line-height: 10px;
}

/* Import dialog */
.dialog {
  position: absolute;
  left: 618px;
  top: 236px;
  width: 451px;
  padding: 1px 6px 6px;
  border: 1px solid #1f2a36;
  border-radius: 7px 7px 5px 5px;
  background:
    linear-gradient(#c8e2fb, #b7d9fb 55%, #b7d9fb 214px, #7590ae 230px) right 0 / 7px 100% no-repeat,
    linear-gradient(#a9b9cb, #dfe6ee 110px, #7590ae 120px) 0 0 / 7px 100% no-repeat,
    linear-gradient(90deg, #d3dae2, #a8b8ca 22%, #7890ab 40%, #7890ab 51%, #b5d9fd 54%, #cce5ff 80%, #b5cbe2) 0 0 / 100% 30px no-repeat,
    #7590ae;
  box-shadow: inset 0 0 0 1px rgba(240, 247, 255, 0.8);
  font-size: 12px;
}
.dialog-head { display: flex; justify-content: space-between; height: 27px; }
.dialog-title { margin: 3px 0 0 1px; font-size: 12px; font-weight: 400; line-height: 20px; }
.close {
  display: flex;
  align-items: center;
  justify-content: center;
  width: 47px;
  height: 19px;
  margin-top: -1px;
  border: 1px solid #52222a;
  border-top: 0;
  border-radius: 0 0 4px 4px;
  background: linear-gradient(#e8a79d, #d57c70 45%, #bb3a28 50%, #cf6a4f);
  box-shadow: inset 0 0 0 1px rgba(255, 220, 210, 0.5);
}
.close svg { width: 12px; height: 10px; }
.dialog-body {
  padding: 15px 13px 15px 12px;
  border: 1px solid #42505f;
  outline: 1px solid rgba(235, 244, 253, 0.7);
  background: #f0f0f0;
}
.group {
  display: grid;
  justify-items: start;
  min-width: 0;
  margin: 0;
  border: 1px solid #d5dfe5;
  border-radius: 3px;
}
.group legend { height: 18px; padding: 0 2px; line-height: 18px; }
.group-scale { padding: 4px 8px 20px 6px; }
.group-import { margin-top: 17px; padding: 7px 8px 12px 6px; row-gap: 6px; }
.group-import .row { margin-left: 25px; }
.row { display: flex; align-items: center; gap: 4px; height: 20px; margin-left: 4px; }
.group-scale .row + .row { margin-top: 4px; }
.row-off { color: #6d6d6d; }
.radio {
  appearance: none;
  width: 12px;
  height: 12px;
  margin: 0;
  border: 1px solid #8b8d8f;
  border-radius: 50%;
  background: radial-gradient(#dcdcdc, #f5f5f5);
}
.radio:checked { background: radial-gradient(circle, #4fb7e0 0, #12395c 3px, #f0f0f0 4px); }
.radio:disabled { border-color: #b5b5b5; }
.radio:disabled:checked { border-color: #999; background: radial-gradient(circle, #bbb 0, #777 3px, #f0f0f0 4px); }
.units { display: flex; align-items: flex-start; margin: 2px 0 0 25px; }
.num {
  width: 44px;
  height: 27px;
  padding: 0 3px 4px;
  border: 1px solid #e3e9ef;
  border-top-color: #abadb3;
  border-radius: 2px;
  background: #fff;
}
.pick { position: relative; margin: 0 7px 0 8px; }
.pick::after {
  content: "";
  position: absolute;
  right: 4px;
  top: 11px;
  border: solid transparent;
  border-width: 4px 4px 0;
  border-top-color: #000;
}
.unit {
  appearance: none;
  display: block;
  width: 84px;
  height: 24px;
  padding: 0 3px;
  border: 1px solid #e3e9ef;
  border-top-color: #abadb3;
  border-radius: 2px;
  background: #fff;
}
.equals { width: 45px; line-height: 26px; overflow: hidden; white-space: nowrap; }
.units-end { margin-left: 10px; line-height: 26px; white-space: nowrap; }
.option { display: flex; align-items: center; gap: 3px; height: 20px; margin-top: 9px; }
.option-last { margin-top: 18px; }
.actions { display: flex; justify-content: center; gap: 8px; margin-top: 21px; }
.action {
  width: 86px;
  height: 28px;
  border: 1px solid #707070;
  border-radius: 3px;
  background: linear-gradient(#f3f3f3, #ebebeb 50%, #dadada 50%, #cdcdcd);
  box-shadow: inset 0 0 0 1px #f8f8f8;
}
.action-main {
  border-color: #3c7fb1;
  background: linear-gradient(#eef4f6, #e0ecf0 50%, #cddfe6 50%, #c3d6dd);
  box-shadow: inset 0 0 0 1px #3ccbf5;
}
```

FILE: grid.js
```js
// Construction-plane grid: every fifth line is a major one.
function lines(origin, pitch, size, end, draw) {
  const paths = { minor: "", major: "" };
  const step = pitch / 5;
  const first = -Math.floor(origin / step);
  const last = Math.min(Math.floor((size - origin) / step), end * 5);
  for (let i = first; i <= last; i += 1) {
    const at = Math.round(origin + i * step) + 0.5;
    paths[i % 5 === 0 ? "major" : "minor"] += draw(at);
  }
  return paths;
}

function drawGrid(canvas) {
  const { width, height } = canvas.getBoundingClientRect();
  const { x, y, pitch, end } = canvas.dataset;
  const stop = end ? Number(end) : Infinity;
  const right = Math.min(width, Number(x) + stop * Number(pitch));
  const columns = lines(Number(x), Number(pitch), width, stop, (at) => `M${at} 0V${height}`);
  const rows = lines(Number(y), Number(pitch), height, stop, (at) => `M0 ${at}H${right}`);
  canvas.querySelector(".grid").innerHTML =
    `<path class="minor" d="${columns.minor}${rows.minor}"/>` +
    `<path class="major" d="${columns.major}${rows.major}"/>`;
}

function drawAll() {
  document.querySelectorAll(".canvas[data-pitch]").forEach(drawGrid);
}

window.addEventListener("resize", drawAll);
drawAll();
```
